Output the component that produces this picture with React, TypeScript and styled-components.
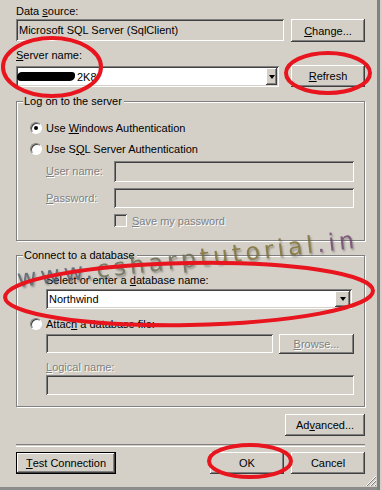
import styled, { createGlobalStyle } from "styled-components";

const Global = createGlobalStyle`
  html, body { margin: 0; padding: 0; background: #d4d0c8; }
  body {
    font-family: "Liberation Sans", Arial, sans-serif;
    font-size: 11px;
    color: #000;
  }
  u { text-decoration: underline; text-underline-offset: 1px; }
`;

const Window = styled.div`
  position: relative;
  width: 382px;
  height: 490px;
  box-sizing: border-box;
  background: #d4d0c8;
  overflow: hidden;
  box-shadow: inset -2px 0 #d4d0c8, inset -5px 0 #808080, inset 0 -3px #8c8c8c;
`;

const Content = styled.div`
  display: flex;
  flex-direction: column;
  width: 349px;
  padding: 4px 0 0 16px;
`;

const Label = styled.div<{ $top?: number; $indent?: number; $disabled?: boolean }>`
  height: 14px;
  line-height: 14px;
  margin-top: ${(p) => p.$top ?? 0}px;
  margin-left: ${(p) => p.$indent ?? 0}px;
  white-space: nowrap;
  color: ${(p) => (p.$disabled ? "#808080" : "#000")};
  text-shadow: ${(p) => (p.$disabled ? "1px 1px 0 #fff" : "none")};
`;

const Row = styled.div<{ $top?: number; $gap?: number; $indent?: number; $end?: boolean }>`
  display: flex;
  align-items: flex-start;
  margin-top: ${(p) => p.$top ?? 0}px;
  margin-left: ${(p) => p.$indent ?? 0}px;
  gap: ${(p) => p.$gap ?? 0}px;
  justify-content: ${(p) => (p.$end ? "flex-end" : "flex-start")};
`;

const sunken = `
  box-shadow: inset 1px 1px #808080, inset -1px -1px #fff, inset 2px 2px #404040, inset -2px -2px #d4d0c8;
`;

const TextBox = styled.div<{ $h?: number; $w?: number }>`
  box-sizing: border-box;
  height: ${(p) => p.$h ?? 21}px;
  ${(p) => (p.$w ? `width: ${p.$w}px;` : "flex: 1;")}
  background: #d4d0c8;
  ${sunken}
  padding: 0 3px;
  display: flex;
  align-items: center;
  white-space: nowrap;
  overflow: hidden;
`;

const Combo = styled.div<{ $h?: number; $w?: number; $mr?: number; $mt?: number }>`
  box-sizing: border-box;
  height: ${(p) => p.$h ?? 21}px;
  ${(p) => (p.$w ? `width: ${p.$w}px;` : "flex: 1;")}
  margin-right: ${(p) => p.$mr ?? 0}px;
  margin-top: ${(p) => p.$mt ?? 0}px;
  background: #fff;
  ${sunken}
  padding: 2px;
  display: flex;
  align-items: stretch;
`;

const ComboText = styled.div`
  flex: 1;
  display: flex;
  align-items: center;
  padding-left: 1px;
  white-space: nowrap;
`;

const DropButton = styled.div<{ $w: number }>`
  width: ${(p) => p.$w}px;
  background: #d4d0c8;
  box-shadow: inset -1px -1px #404040, inset 1px 1px #fff, inset -2px -2px #808080;
  display: flex;
  align-items: center;
  justify-content: center;
  &::after {
    content: "";
    border-left: 3.5px solid transparent;
    border-right: 3.5px solid transparent;
    border-top: 4px solid #000;
  }
`;

const Redacted = styled.span`
  display: inline-block;
  width: 58px;
  height: 9px;
  margin-left: -2px;
  margin-right: 2px;
  background: #000;
  border-radius: 5px 3px 5px 4px;
`;

const Button = styled.div<{ $w: number; $h?: number; $default?: boolean; $disabled?: boolean }>`
  box-sizing: border-box;
  width: ${(p) => p.$w}px;
  height: ${(p) => p.$h ?? 22}px;
  background: #d4d0c8;
  display: flex;
  align-items: center;
  justify-content: center;
  white-space: nowrap;
  color: ${(p) => (p.$disabled ? "#808080" : "#000")};
  text-shadow: ${(p) => (p.$disabled ? "1px 1px 0 #fff" : "none")};
  border: ${(p) => (p.$default ? "1px solid #000" : "none")};
  box-shadow: inset -1px -1px #404040, inset 1px 1px #fff, inset -2px -2px #808080;
`;

const Group = styled.div<{ $h: number; $top: number }>`
  position: relative;
  box-sizing: border-box;
  height: ${(p) => p.$h}px;
  margin-top: ${(p) => p.$top}px;
  border: 1px solid #808080;
  box-shadow: inset 1px 1px #fff, 1px 1px #fff;
  padding: 0 10px 0 13px;
  display: flex;
  flex-direction: column;
`;

const Legend = styled.span`
  position: absolute;
  top: -7px;
  left: 6px;
  padding: 0 2px 0 1px;
  background: #d4d0c8;
  line-height: 13px;
`;

const RadioRow = styled.div<{ $top: number; $indent?: number; $gap?: number }>`
  display: flex;
  align-items: center;
  height: 13px;
  margin-top: ${(p) => p.$top}px;
  margin-left: ${(p) => p.$indent ?? 0}px;
  gap: ${(p) => p.$gap ?? 4}px;
  white-space: nowrap;
`;

const Radio = styled.span<{ $checked?: boolean }>`
  position: relative;
  box-sizing: border-box;
  width: 12px;
  height: 12px;
  border-radius: 50%;
  background: #fff;
  border: 1px solid;
  border-color: #808080 #fff #fff #808080;
  box-shadow: inset 1px 1px #404040;
  &::after {
    content: "";
    display: ${(p) => (p.$checked ? "block" : "none")};
    position: absolute;
    left: 3px;
    top: 3px;
    width: 4px;
    height: 4px;
    border-radius: 50%;
    background: #000;
  }
`;

const FieldName = styled.span<{ $w: number }>`
  width: ${(p) => p.$w}px;
  line-height: 21px;
  color: #808080;
  text-shadow: 1px 1px 0 #fff;
`;

const CheckBox = styled.span`
  box-sizing: border-box;
  width: 13px;
  height: 13px;
  background: #d4d0c8;
  ${sunken}
`;

const Disabled = styled.span`
  color: #808080;
  text-shadow: 1px 1px 0 #fff;
`;

const Separator = styled.div`
  height: 1px;
  margin-top: 8px;
  border-top: 1px solid #808080;
  border-bottom: 1px solid #fff;
`;

const Spacer = styled.div`
  flex: 1;
`;

const Watermark = styled.div`
  position: absolute;
  left: 17px;
  top: 265px;
  font-family: "DejaVu Sans", sans-serif;
  font-size: 24px;
  line-height: 28px;
  letter-spacing: 3.9px;
  white-space: nowrap;
  transform: rotate(-6.6deg);
  transform-origin: 0 50%;
  opacity: 0.8;
  text-shadow: 1px 2px 2px rgba(70, 70, 70, 0.55);
  pointer-events: none;
`;

const Tint = styled.span<{ $c: string }>`
  color: ${(p) => p.$c};
`;

const Marks = styled.svg`
  position: absolute;
  inset: 0;
  pointer-events: none;
`;

const Grip = styled.svg`
  position: absolute;
  right: 5px;
  bottom: 3px;
`;

export default function App() {
  return (
    <>
      <Global />
      <Window>
        <Content>
          <Label>
            Data <u>s</u>ource:
          </Label>
          <Row $top={1} $gap={7}>
            <TextBox $h={22}>Microsoft SQL Server (SqlClient)</TextBox>
            <Button $w={74} $h={23}>
              <u>C</u>hange...
            </Button>
          </Row>
          <Label $top={6}>
            <u>S</u>erver name:
          </Label>
          <Row $top={3} $gap={12}>
            <Combo $w={263} $h={21} $mt={1}>
              <ComboText>
                <Redacted />
                2K8
              </ComboText>
              <DropButton $w={11} />
            </Combo>
            <Button $w={74}>
              <u>R</u>efresh
            </Button>
          </Row>

          <Group $h={140} $top={14}>
            <Legend>Log on to the server</Legend>
            <RadioRow $top={19}>
              <Radio $checked />
              <span>
                Use <u>W</u>indows Authentication
              </span>
            </RadioRow>
            <RadioRow $top={8}>
              <Radio />
              <span>
                Use S<u>Q</u>L Server Authentication
              </span>
            </RadioRow>
            <Row $top={6} $indent={16}>
              <FieldName $w={68}>
                <u>U</u>ser name:
              </FieldName>
              <TextBox $h={21} />
            </Row>
            <Row $top={6} $indent={16}>
              <FieldName $w={68}>
                <u>P</u>assword:
              </FieldName>
              <TextBox $h={20} />
            </Row>
            <RadioRow $top={5} $indent={84} $gap={5}>
              <CheckBox />
              <Disabled>
                <u>S</u>ave my password
              </Disabled>
            </RadioRow>
          </Group>

          <Group $h={152} $top={14}>
            <Legend>Connect to a database</Legend>
            <Label $top={17} $indent={16}>
              Select or enter a <u>d</u>atabase name:
            </Label>
            <Row $top={2} $indent={16}>
              <Combo $h={20} $mr={2}>
                <ComboText>Northwind</ComboText>
                <DropButton $w={15} />
              </Combo>
            </Row>
            <RadioRow $top={8}>
              <Radio />
              <span>
                Attac<u>h</u> a database file:
              </span>
            </RadioRow>
            <Row $top={4} $indent={16} $gap={6}>
              <TextBox $h={19} />
              <Button $w={75} $h={20} $disabled>
                <u>B</u>rowse...
              </Button>
            </Row>
            <Label $top={6} $indent={16} $disabled>
              <u>L</u>ogical name:
            </Label>
            <Row $top={1} $indent={16}>
              <TextBox $h={20} />
            </Row>
          </Group>

          <Row $top={7} $end>
            <Button $w={80}>
              Ad<u>v</u>anced...
            </Button>
          </Row>
          <Separator />
          <Row $top={5} $gap={7}>
            <Button $w={100} $default>
              <u>T</u>est Connection
            </Button>
            <Spacer />
            <Button $w={74}>OK</Button>
            <Button $w={74}>Cancel</Button>
          </Row>
        </Content>

        <Watermark>
          <Tint $c="#4e5a68">www.</Tint>
          <Tint $c="#66664e">csharp</Tint>
          <Tint $c="#7a6a2c">tutorial</Tint>
          <Tint $c="#6a3e68">.in</Tint>
        </Watermark>

        <Grip width="12" height="12" viewBox="0 0 12 12">
          <g strokeWidth="1">
            <line x1="11" y1="1" x2="1" y2="11" stroke="#fff" />
            <line x1="11" y1="2" x2="2" y2="11" stroke="#808080" />
            <line x1="11" y1="5" x2="5" y2="11" stroke="#fff" />
            <line x1="11" y1="6" x2="6" y2="11" stroke="#808080" />
            <line x1="11" y1="9" x2="9" y2="11" stroke="#fff" />
            <line x1="11" y1="10" x2="10" y2="11" stroke="#808080" />
          </g>
        </Grip>

        <Marks width="382" height="490" viewBox="0 0 382 490">
          <g fill="none" stroke="#e8141e" strokeWidth="4">
            <ellipse cx="52" cy="67" rx="49" ry="29" />
            <ellipse cx="328" cy="73" rx="42" ry="20" />
            <ellipse cx="189" cy="294" rx="184" ry="31" transform="rotate(-1 189 294)" />
            <ellipse cx="250" cy="461" rx="41" ry="16" />
          </g>
        </Marks>
      </Window>
    </>
  );
}
